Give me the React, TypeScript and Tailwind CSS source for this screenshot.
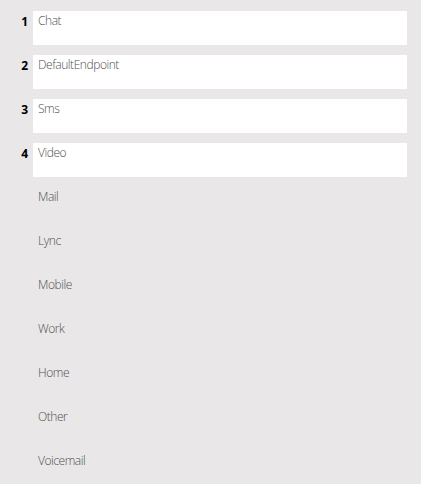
const items = [
  'Chat',
  'DefaultEndpoint',
  'Sms',
  'Video',
  'Mail',
  'Lync',
  'Mobile',
  'Work',
  'Home',
  'Other',
  'Voicemail',
];

export default function App() {
  return (
    <div className="min-h-screen w-full bg-[#e9e7e7] pt-[11px] font-['Open_Sans',sans-serif]">
      <div className="flex flex-col gap-[10px]">
        {items.map((name, i) => {
          const ranked = i < 4;
          return (
            <div key={name} className="flex h-[34px]">
              <div className="w-[33px] pr-[5px] pt-[2px] text-right text-[12px] font-bold text-black">
                {ranked ? i + 1 : ''}
              </div>
              <div
                className={`w-[374px] pl-[5px] pt-[1px] text-[12px] tracking-[-0.45px] font-light text-[#4f4f4f] ${
                  ranked ? 'bg-white' : ''
                }`}
              >
                {name}
              </div>
            </div>
          );
        })}
      </div>
    </div>
  );
}
